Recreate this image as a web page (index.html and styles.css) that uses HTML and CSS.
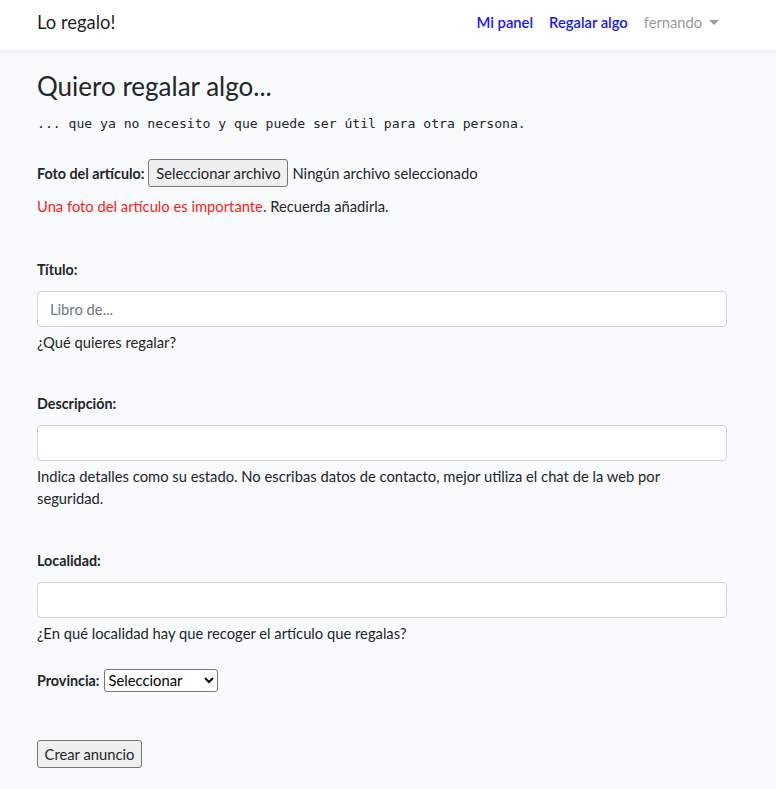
FILE: index.html
```html
<!DOCTYPE html>
<html lang="es">
<head>
<meta charset="utf-8">
<title>Lo regalo!</title>
<link rel="stylesheet" href="styles.css">
</head>
<body>
<nav class="navbar">
  <div class="container nav-inner">
    <a class="brand" href="#">Lo regalo!</a>
    <ul class="nav-links">
      <li><a class="nav-link primary" href="#">Mi panel</a></li>
      <li><a class="nav-link primary" href="#">Regalar algo</a></li>
      <li><a class="nav-link user" href="#">fernando <span class="caret"></span></a></li>
    </ul>
  </div>
</nav>
<main class="container main">
  <h3 class="title">Quiero regalar algo...</h3>
  <p class="mono">... que ya no necesito y que puede ser útil para otra persona.</p>

  <div class="file-row">
    <label class="bold">Foto del artículo:</label>
    <button class="btn-native file-btn" type="button">Seleccionar archivo</button>
    <span class="file-name">Ningún archivo seleccionado</span>
  </div>
  <p class="note"><span class="red">Una foto del artículo es importante</span>. Recuerda añadirla.</p>

  <div class="group first">
    <label class="bold block">Título:</label>
    <input class="control" type="text" placeholder="Libro de...">
    <small class="help">¿Qué quieres regalar?</small>
  </div>

  <div class="group">
    <label class="bold block">Descripción:</label>
    <input class="control" type="text">
    <small class="help">Indica detalles como su estado. No escribas datos de contacto, mejor utiliza el chat de la web por seguridad.</small>
  </div>

  <div class="group">
    <label class="bold block">Localidad:</label>
    <input class="control" type="text">
    <small class="help">¿En qué localidad hay que recoger el artículo que regalas?</small>
  </div>

  <div class="prov-row">
    <label class="bold">Provincia:</label>
    <select class="select">
      <option>Seleccionar</option>
    </select>
  </div>

  <button class="btn-native submit" type="button">Crear anuncio</button>
</main>
</body>
</html>
```
FILE: styles.css
```css
* { box-sizing: border-box; }
html, body { margin: 0; padding: 0; }
body {
  background: #f8fafc;
  color: #212529;
  font-family: Lato, "Noto Sans", sans-serif;
  font-size: 14.75px;
  line-height: 23px;
}
.container {
  width: 690px;
  margin-left: 37px;
}
.navbar {
  background: #fff;
  height: 50px;
  box-shadow: 0 2px 4px rgba(0, 0, 0, 0.05);
}
.nav-inner {
  height: 50px;
  padding-bottom: 6px;
  display: flex;
  align-items: center;
  justify-content: space-between;
}
.brand {
  font-size: 18.4px;
  color: rgba(0, 0, 0, 0.9);
  text-decoration: none;
}
.nav-links {
  list-style: none;
  margin: 0;
  padding: 0;
  display: flex;
}
.nav-link {
  display: block;
  padding: 0 8px;
  text-decoration: none;
}
.nav-link.primary { color: #1414ff; font-weight: 600; }
.nav-link.user { color: #9a9a9a; }
.caret {
  display: inline-block;
  margin-left: 3px;
  vertical-align: 3px;
  border-top: 5px solid #9a9a9a;
  border-left: 5px solid transparent;
  border-right: 5px solid transparent;
}
.main { padding-top: 21px; padding-bottom: 20px; }
.title {
  font-size: 26px;
  font-weight: 400;
  line-height: 30px;
  margin: 0 0 11px;
}
.mono {
  font-family: "DejaVu Sans Mono", monospace;
  font-size: 13.1px;
  margin: 0;
}
.bold { font-weight: 700; font-size: 14.3px; }
.block { display: block; }
.file-row {
  margin-top: 24px;
  display: flex;
  align-items: center;
  height: 28px;
}
.btn-native {
  font-family: inherit;
  font-size: 14.75px;
  color: #212529;
  background: #efefef;
  border: 1px solid #767676;
  border-radius: 3px;
  height: 28px;
  padding: 0 6px;
}
.file-btn { margin-left: 4px; width: 140px; }
.file-name { margin-left: 4px; }
.note { margin: 8px 0 0; }
.red { color: #ff1a1a; }
.group { margin-top: 39.5px; }
.group label { margin-bottom: 10px; }
.control {
  display: block;
  width: 100%;
  height: 36px;
  padding: 6px 12px;
  font-family: inherit;
  font-size: 14.75px;
  color: #495057;
  background: #fff;
  border: 1px solid #ced4da;
  border-radius: 4px;
}
.control::placeholder { color: #6c757d; }
.help {
  display: block;
  margin-top: 4px;
  font-size: 14.75px;
  line-height: 22px;
}
.prov-row {
  margin-top: 25px;
  display: flex;
  align-items: center;
  height: 23px;
}
.select {
  margin-left: 4px;
  width: 114px;
  height: 23px;
  font-family: inherit;
  font-size: 14.75px;
  color: #000;
  background: #fff;
  border: 1px solid #767676;
  border-radius: 3px;
}
.submit {
  display: block;
  margin-top: 48px;
  width: 105px;
}
```
